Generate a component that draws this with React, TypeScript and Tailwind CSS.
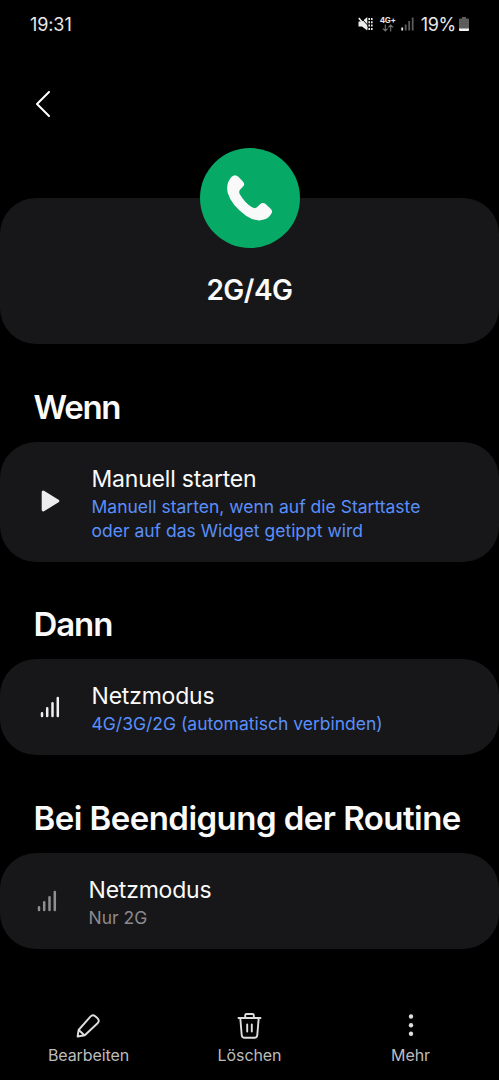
import React from "react";
import clsx from "clsx";

const routine = {
  title: "2G/4G",
  sections: [
    {
      id: 1,
      heading: "Wenn",
      headingClass: "mb-[15px] mt-[43px] tracking-[-1.3px]",
      icon: "play",
      label: "Manuell starten",
      lines: ["Manuell starten, wenn auf die Starttaste", "oder auf das Widget getippt wird"],
      muted: false,
    },
    {
      id: 2,
      heading: "Dann",
      headingClass: "mb-[15px] mt-[42px] tracking-[-1.1px]",
      icon: "signal",
      label: "Netzmodus",
      lines: ["4G/3G/2G (automatisch verbinden)"],
      muted: false,
    },
    {
      id: 3,
      heading: "Bei Beendigung der Routine",
      headingClass: "mb-[15px] mt-[43px] tracking-[-0.54px]",
      icon: "signal",
      label: "Netzmodus",
      lines: ["Nur 2G"],
      muted: true,
    },
  ],
};

function PhoneIcon() {
  return (
    <svg viewBox="0 0 300 300" className="size-[100px]" fill="#f9f9f9">
      <path d="M95 86Q105 77 115 86L130 102Q135 109 130 115L120 125Q116 130 119 138Q134 164 156 178Q165 183 171 178L181 168Q188 162 196 167L212 182Q220 190 213 199Q203 215 182 217Q162 219 138 203Q94 171 83 134Q77 105 95 86Z" />
    </svg>
  );
}

function PlayIcon() {
  return (
    <svg viewBox="0 0 20 22" className="mb-[2px] h-[22px] w-5" fill="#ececec" stroke="#ececec" strokeWidth="3" strokeLinejoin="round">
      <path d="M3.2 2L17.8 11L3.2 20Z" />
    </svg>
  );
}

function SignalIcon() {
  return (
    <svg viewBox="0 0 20 22" className="h-[22px] w-5" fill="none" stroke="currentColor" strokeWidth="2.5" strokeLinecap="round">
      <path d="M2 17.2V20M7.2 12.2V20M12.5 7.2V20M17.8 2V20" />
    </svg>
  );
}

function StatusBar() {
  return (
    <div className="flex h-12 items-center justify-between pl-[30px] pr-[30px] text-[18px] text-[#e8e8e8]">
      <span className="tracking-[-0.1px]">19:31</span>
      <div className="flex items-center">
        <svg viewBox="0 0 16 16" className="mr-[6px] size-4" fill="none" stroke="#ededed">
          <path d="M0.5 5.5H4L9.3 1V14.5L4 10.5H0.5Z" fill="#ededed" stroke="none" />
          <path d="M2.2 1L10 9.5" stroke="#000" strokeWidth="1" />
          <path d="M0.8 2L9.3 12.5" strokeWidth="1.6" />
          <path d="M11.2 2V14M13.8 2V14" strokeWidth="1.6" strokeDasharray="2 1.3" />
        </svg>
        <div className="mr-[5px] flex w-4 flex-col items-center">
          <span className="text-[8px] font-bold leading-[8px] tracking-[-0.3px]">4G+</span>
          <svg viewBox="0 0 12 8" className="h-2 w-3" fill="none" stroke="#737373" strokeWidth="1.1">
            <path d="M3.3 0.5V7M1 4.7L3.3 7L5.6 4.7M8.7 7.5V1M6.4 3.3L8.7 1L11 3.3" />
          </svg>
        </div>
        <svg viewBox="0 0 13 14" className="mr-[7px] h-3.5 w-[13px]" fill="none" strokeWidth="1.8">
          <path d="M1.2 10.5V13.5" stroke="#ededed" />
          <path d="M4.7 7.5V13.5M8.2 4V13.5M11.7 0.5V13.5" stroke="#5c5c5c" />
        </svg>
        <span className="mr-[3px] tracking-[-0.3px]">19%</span>
        <svg viewBox="0 0 10 14" className="h-3.5 w-2.5">
          <path d="M3 0H7V1.5H9Q10 1.5 10 2.5V13Q10 14 9 14H1Q0 14 0 13V2.5Q0 1.5 1 1.5H3Z" fill="#5c5c5c" />
          <path d="M0 11.5H10V13Q10 14 9 14H1Q0 14 0 13Z" fill="#f2f2f2" />
        </svg>
      </div>
    </div>
  );
}

const actions = [
  {
    label: "Bearbeiten",
    icon: (
      <path d="M2.6 24.5L3.6 18L15.6 4.4Q17.8 2.1 20.2 4.2L22.6 6.3Q24.8 8.6 22.8 11L9.8 23.3L2.6 24.5ZM4 18.3L9.1 23" />
    ),
  },
  {
    label: "Löschen",
    icon: (
      <path d="M2.5 6H24.5M9.2 5.8V3.3Q9.2 2 10.5 2H16.5Q17.8 2 17.8 3.3V5.8M4.3 6.2L5.7 23Q5.9 25.8 8.7 25.8H18.3Q21.1 25.8 21.3 23L22.7 6.2M11.2 12.5V19.5M15.8 12.5V19.5" />
    ),
  },
  {
    label: "Mehr",
    icon: (
      <g fill="#dedede" stroke="none">
        <circle cx="14" cy="4.5" r="2.2" />
        <circle cx="14" cy="13.2" r="2.2" />
        <circle cx="14" cy="21.8" r="2.2" />
      </g>
    ),
  },
];

export default function App() {
  return (
    <div className="flex h-[1080px] w-[499px] flex-col overflow-hidden bg-black font-['Inter',sans-serif] text-[#fafafa]">
      <StatusBar />

      <header className="flex h-[100px] items-start pl-9 pt-[43px]">
        <svg viewBox="0 0 14 26" className="h-[26px] w-3.5" fill="none" stroke="#fff" strokeWidth="2" strokeLinecap="round" strokeLinejoin="round">
          <path d="M13 1L1 13L13 25" />
        </svg>
      </header>

      <section className="mt-[50px] flex h-[146px] flex-col items-center rounded-[36px] bg-[#171719]">
        <div className="-mt-[50px] size-[100px] rounded-full bg-[#07a966]">
          <PhoneIcon />
        </div>
        <h1 className="mt-[26px] text-[28px] font-semibold leading-8 tracking-[-0.5px]">{routine.title}</h1>
      </section>

      {routine.sections.map((section) => (
        <section key={section.id}>
          <h2
            className={clsx(
              "whitespace-nowrap pl-[33.5px] text-[33px] font-semibold leading-10",
              section.headingClass
            )}
          >
            {section.heading}
          </h2>
          <div
            className={clsx(
              "flex items-center rounded-[36px] bg-[#171719]",
              section.lines.length > 1 ? "h-[120px]" : "h-24",
              section.muted ? "pl-[37px]" : "pl-10"
            )}
          >
            <div className={clsx("mr-[31.5px] shrink-0", section.muted ? "text-[#8f8f91]" : "text-[#f0f0f0]")}>
              {section.icon === "play" ? <PlayIcon /> : <SignalIcon />}
            </div>
            <div className="whitespace-nowrap pt-px">
              <p className="text-[23px] leading-8 tracking-[-0.2px]">{section.label}</p>
              <p
                className={clsx(
                  "text-[17.5px] leading-6",
                  section.muted ? "text-[#8b8b8d]" : "text-[#5a8ffb]"
                )}
              >
                {section.lines.map((line) => (
                  <span key={line} className="block">
                    {line}
                  </span>
                ))}
              </p>
            </div>
          </div>
        </section>
      ))}

      <nav className="mt-auto flex h-[68px] justify-center">
        {actions.map((action) => (
          <button key={action.label} className="flex w-[161px] flex-col items-center">
            <svg viewBox="0 0 27 28" className="h-7 w-[27px]" fill="none" stroke="#dedede" strokeWidth="1.9" strokeLinecap="round" strokeLinejoin="round">
              {action.icon}
            </svg>
            <span className="mt-[5px] text-[16px] leading-5 tracking-[-0.1px] text-[#bcbcbc]">{action.label}</span>
          </button>
        ))}
      </nav>
    </div>
  );
}
